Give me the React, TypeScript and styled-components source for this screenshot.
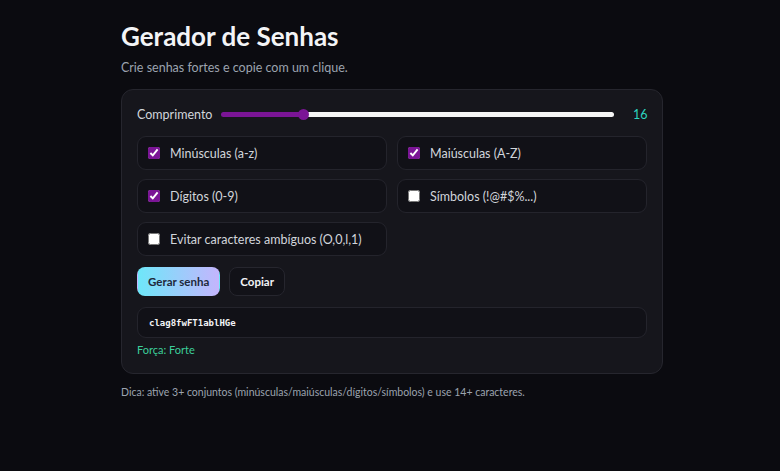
import React, { useState } from "react";
import styled, { createGlobalStyle } from "styled-components";

const Global = createGlobalStyle`
  html, body { margin: 0; padding: 0; background: #0b0b10; }
  body { font-family: Lato, "Noto Sans", sans-serif; color: #e5e7eb; }
  * { box-sizing: border-box; }
`;

const Page = styled.div`
  width: 542px;
  margin-left: 121px;
  padding-top: 19px;
`;

const Title = styled.h1`
  margin: 0;
  font-size: 26px;
  font-weight: 700;
  color: #f3f4f6;
  line-height: 34px;
`;

const Subtitle = styled.p`
  margin: 7px 0 13px;
  font-size: 12.5px;
  color: #9ca3af;
  line-height: 16px;
`;

const Card = styled.div`
  background: #16161c;
  border: 1px solid #26262e;
  border-radius: 12px;
  padding: 15px 15px 16px;
  display: flex;
  flex-direction: column;
`;

const SliderRow = styled.div`
  display: flex;
  align-items: center;
  gap: 9px;
  height: 18px;
  margin-bottom: 13px;
`;

const Label = styled.span`
  font-size: 12.5px;
  color: #d1d5db;
`;

const Range = styled.input`
  flex: 1;
  appearance: none;
  -webkit-appearance: none;
  height: 5px;
  border-radius: 3px;
  outline: none;
  margin: 0 10px 0 0;
  &::-webkit-slider-thumb {
    -webkit-appearance: none;
    width: 11px;
    height: 11px;
    border-radius: 50%;
    background: #7b1596;
  }
`;

const Value = styled.span`
  font-size: 12.5px;
  color: #2dd4bf;
  width: 14px;
  text-align: right;
`;

const Grid = styled.div`
  display: grid;
  grid-template-columns: 1fr 1fr;
  column-gap: 10px;
  row-gap: 9px;
`;

const Option = styled.label`
  display: flex;
  align-items: center;
  gap: 7px;
  height: 34px;
  padding: 0 10px;
  background: #111117;
  border: 1px solid #24242c;
  border-radius: 9px;
  font-size: 12.5px;
  color: #d1d5db;
  white-space: nowrap;
`;

const Check = styled.input`
  width: 12px;
  height: 12px;
  margin: 0 3px 0 0;
  accent-color: #7b1596;
`;

const Buttons = styled.div`
  display: flex;
  gap: 9px;
  margin-top: 11px;
`;

const Button = styled.button<{ $primary?: boolean }>`
  height: 29px;
  padding: 0 10px;
  border-radius: 8px;
  font-family: Lato, sans-serif;
  font-weight: 700;
  font-size: 11.5px;
  cursor: pointer;
  color: ${(p) => (p.$primary ? "#1e293b" : "#f3f4f6")};
  background: ${(p) => (p.$primary ? "linear-gradient(90deg, #6ee7f9, #c4b5fd)" : "#121218")};
  border: 1px solid ${(p) => (p.$primary ? "transparent" : "#26262e")};
`;

const Output = styled.div`
  margin-top: 11px;
  height: 31px;
  display: flex;
  align-items: center;
  padding: 0 11px;
  background: #111117;
  border: 1px solid #24242c;
  border-radius: 9px;
  font-family: "DejaVu Sans Mono", monospace;
  font-size: 9px;
  font-weight: 700;
  color: #f3f4f6;
`;

const Strength = styled.div`
  margin-top: 5px;
  font-size: 11px;
  color: #3ccf9a;
  line-height: 14px;
`;

const Tip = styled.p`
  margin: 12px 0 0;
  font-size: 10.5px;
  color: #9ca3af;
`;

export default function App() {
  const [len, setLen] = useState(16);
  const pct = ((len - 4) / (64 - 4)) * 100;
  const opts = [
    { label: "Minúsculas (a-z)", on: true },
    { label: "Maiúsculas (A-Z)", on: true },
    { label: "Dígitos (0-9)", on: true },
    { label: "Símbolos (!@#$%...)", on: false },
    { label: "Evitar caracteres ambíguos (O,0,l,1)", on: false },
  ];
  return (
    <>
      <Global />
      <Page>
        <Title>Gerador de Senhas</Title>
        <Subtitle>Crie senhas fortes e copie com um clique.</Subtitle>
        <Card>
          <SliderRow>
            <Label>Comprimento</Label>
            <Range
              type="range"
              min={4}
              max={64}
              value={len}
              onChange={(e) => setLen(Number(e.target.value))}
              style={{ background: `linear-gradient(90deg, #7b1596 ${pct}%, #f5f5f5 ${pct}%)` }}
            />
            <Value>{len}</Value>
          </SliderRow>
          <Grid>
            {opts.map((o) => (
              <Option key={o.label}>
                <Check type="checkbox" defaultChecked={o.on} />
                {o.label}
              </Option>
            ))}
          </Grid>
          <Buttons>
            <Button $primary>Gerar senha</Button>
            <Button>Copiar</Button>
          </Buttons>
          <Output>clag8fwFT1ablHGe</Output>
          <Strength>Força: Forte</Strength>
        </Card>
        <Tip>Dica: ative 3+ conjuntos (minúsculas/maiúsculas/dígitos/símbolos) e use 14+ caracteres.</Tip>
      </Page>
    </>
  );
}
